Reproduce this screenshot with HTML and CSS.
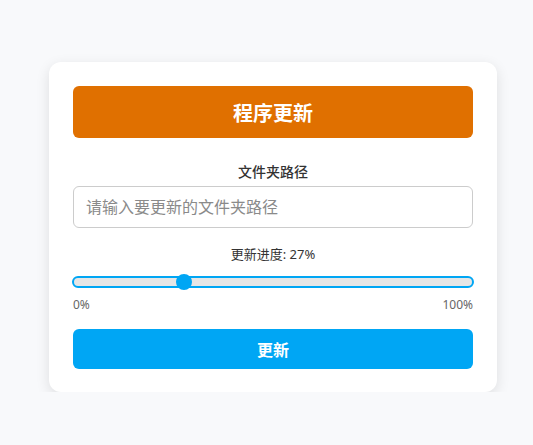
FILE: index.html
```html
<!DOCTYPE html>
<html lang="zh">
<head>
<meta charset="utf-8">
<title>程序更新</title>
<link rel="stylesheet" href="styles.css">
</head>
<body>
<div class="card">
  <div class="header">程序更新</div>
  <label class="label" for="path">文件夹路径</label>
  <input class="input" id="path" type="text" placeholder="请输入要更新的文件夹路径">
  <div class="progress-label">更新进度: 27%</div>
  <div class="slider">
    <div class="track"></div>
    <div class="thumb" style="left: calc((100% - 16px) * 0.27)"></div>
  </div>
  <div class="scale"><span>0%</span><span>100%</span></div>
  <button class="btn">更新</button>
</div>
</body>
</html>
```
FILE: styles.css
```css
* { box-sizing: border-box; }
html, body { margin: 0; padding: 0; }
body {
  background: #f8f9fb;
  font-family: "Noto Sans", "Noto Sans CJK SC", sans-serif;
  color: #333;
  padding-top: 62px;
}
.card {
  width: 448px;
  margin: 0 0 0 49px;
  background: #fff;
  border-radius: 12px;
  padding: 24px 24px 23px;
  box-shadow: 0 4px 14px rgba(0,0,0,0.11);
  display: flex;
  flex-direction: column;
}
.header {
  height: 52px;
  background: #e07000;
  border-radius: 6px;
  color: #fff;
  font-size: 20px;
  font-weight: 700;
  display: flex;
  align-items: center;
  justify-content: center;
  margin-bottom: 24px;
}
.label {
  display: block;
  text-align: center;
  font-size: 14px;
  font-weight: 500;
  line-height: 20px;
  color: #333;
  margin-bottom: 4px;
}
.input {
  height: 42px;
  width: 100%;
  border: 1px solid #ccc;
  border-radius: 6px;
  padding: 0 12px;
  font-family: inherit;
  font-size: 16px;
  color: #333;
  outline: none;
  margin-bottom: 16px;
}
.input::placeholder { color: #8a8a8a; }
.progress-label {
  text-align: center;
  font-size: 13px;
  line-height: 20px;
  color: #333;
}
.slider {
  position: relative;
  height: 20px;
  margin: 8px -1px 0;
}
.track {
  position: absolute;
  left: 0; right: 0; top: 4px;
  height: 12px;
  border: 2px solid #00a6f4;
  border-radius: 6px;
  background: #e6e6e6;
}
.thumb {
  position: absolute;
  top: 2px;
  width: 16px;
  height: 16px;
  border-radius: 50%;
  background: #00a6f4;
}
.scale {
  display: flex;
  justify-content: space-between;
  font-size: 12px;
  line-height: 16px;
  color: #666;
  margin-top: 5px;
  margin-bottom: 16px;
}
.btn {
  height: 40px;
  border: none;
  border-radius: 6px;
  background: #00a6f4;
  color: #fff;
  font-family: inherit;
  font-size: 16px;
  font-weight: 700;
  cursor: pointer;
}
```
